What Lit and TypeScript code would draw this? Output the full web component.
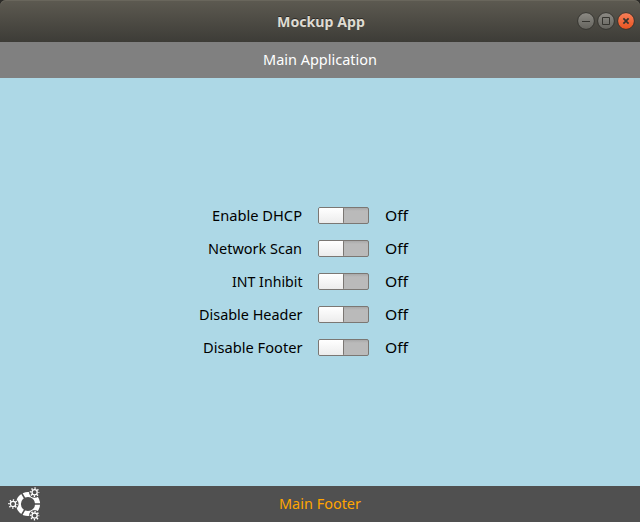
import { LitElement, html, css, svg } from "lit";
import { customElement, property } from "lit/decorators.js";

@customElement("fit-text")
class FitText extends LitElement {
  @property() text = "";
  @property({ type: Number }) width = 0;

  static styles = css`
    :host { display: block; }
    svg { display: block; overflow: visible; }
    text { fill: currentColor; }
  `;

  render() {
    return html`<svg width=${this.width} height="20" role="img" aria-label=${this.text}>
      ${svg`<text x="0" y="15" textLength=${this.width} lengthAdjust="spacingAndGlyphs">${this.text}</text>`}
    </svg>`;
  }
}

@customElement("toggle-row")
class ToggleRow extends LitElement {
  @property() label = "";
  @property({ type: Number }) width = 0;

  static styles = css`
    :host { display: grid; grid-template-columns: 302px 51px 1fr; column-gap: 16px; height: 33px; align-items: center; }
    .label { justify-self: end; }
    .track {
      box-sizing: border-box; width: 51px; height: 17px; display: flex;
      border: 1px solid #7b7773; border-radius: 2px;
      background: linear-gradient(#a9a9a9, #bababa 3px);
    }
    .knob {
      box-sizing: border-box; width: 25px; height: 15px; border-right: 1px solid #7b7773;
      border-radius: 1px; background: linear-gradient(#fff, #ececec);
    }
  `;

  render() {
    return html`
      <fit-text class="label" .text=${this.label} .width=${this.width}></fit-text>
      <div class="track"><div class="knob"></div></div>
      <fit-text text="Off" .width=${23}></fit-text>
    `;
  }
}

const rows: [string, number][] = [
  ["Enable DHCP", 90],
  ["Network Scan", 94],
  ["INT Inhibit", 70.5],
  ["Disable Header", 103.5],
  ["Disable Footer", 99.5],
];

const buttons = [
  { kind: "min", path: "M5 9.5h8" },
  { kind: "max", path: "M5.5 5.5h7v7h-7z" },
  { kind: "close", path: "M6.4 6.4l5.2 5.2M11.6 6.4l-5.2 5.2" },
];

const gear = (x: number, y: number) => svg`
  <circle class="moat" cx=${x} cy=${y} r="5.6"/>
  <circle class="hub" cx=${x} cy=${y} r="2.6"/>
  <circle class="teeth" cx=${x} cy=${y} r="4"/>`;

@customElement("app-root")
class AppRoot extends LitElement {
  static styles = css`
    :host {
      display: flex; flex-direction: column; width: 640px; height: 522px; overflow: hidden;
      font: 14.5px "Noto Sans", "Open Sans", sans-serif; color: #000; background: #2c2b28;
    }
    .title {
      box-sizing: border-box; height: 42px; display: grid; grid-template-columns: 276.5px 1fr auto;
      align-items: center; padding-right: 5px; border-radius: 6px 6px 0 0;
      background: linear-gradient(#5d5a51, #3d3c37); box-shadow: inset 0 1px #69665c;
      font-size: 14px; font-weight: 700; color: #dfdbd2; text-shadow: 0 -1px #2a2926;
    }
    .name { grid-column: 2; padding-top: 2px; }
    .buttons { display: flex; gap: 2px; }
    .buttons svg { display: block; overflow: visible; }
    .buttons path { fill: none; stroke: #35342f; }
    .buttons .close { stroke-width: 1.7; }
    .header { height: 36px; display: flex; justify-content: center; align-items: center; background: #808080; color: #fff; }
    .main { flex: 1; background: #add8e6; padding-top: 121px; }
    .footer { height: 36px; display: grid; grid-template-columns: 271px 1fr; padding-left: 8px; align-items: center; background: #505050; color: #ffa500; }
    .logo { overflow: visible; }
    .hub, .teeth, .ring, .gap { fill: none; stroke: #fff; }
    .hub { stroke-width: 1.3; }
    .teeth { stroke-width: 1.7; stroke-dasharray: 1.3 1.8416; stroke-dashoffset: 0.65; }
    .ring { stroke-width: 5; }
    .gap { stroke: #505050; stroke-width: 1.5; }
    .moat { fill: #505050; }
  `;

  render() {
    return html`
      <div class="title">
        <fit-text class="name" text="Mockup App" .width=${88}></fit-text>
        <div class="buttons">
          ${buttons.map(({ kind, path }) => html`
            <svg width="18" height="18" viewBox="0 0 18 18">
              <defs><linearGradient id="fill-${kind}" x2="0" y2="1">
                <stop offset="0" stop-color=${kind === "close" ? "#f7805a" : "#8d8b85"}/>
                <stop offset="1" stop-color=${kind === "close" ? "#e9531f" : "#64635d"}/>
              </linearGradient></defs>
              <circle cx="9" cy="9" r="8.4" fill="url(#fill-${kind})" stroke="#35342f"/>
              <path class=${kind} d=${path}/>
            </svg>`)}
        </div>
      </div>
      <div class="header"><fit-text text="Main Application" .width=${114}></fit-text></div>
      <div class="main">
        ${rows.map(([label, width]) => html`<toggle-row .label=${label} .width=${width}></toggle-row>`)}
      </div>
      <div class="footer">
        <svg class="logo" width="32" height="32" viewBox="0 0 32 32">
          <circle class="ring" cx="20" cy="16" r="9.6"/>
          <path class="gap" d="M20 16h13M20 16l-7-12M20 16l-7 12"/>
          ${gear(5, 16)}${gear(26.6, 4.2)}${gear(26.6, 27.6)}
        </svg>
        <fit-text text="Main Footer" .width=${82}></fit-text>
      </div>
    `;
  }
}
